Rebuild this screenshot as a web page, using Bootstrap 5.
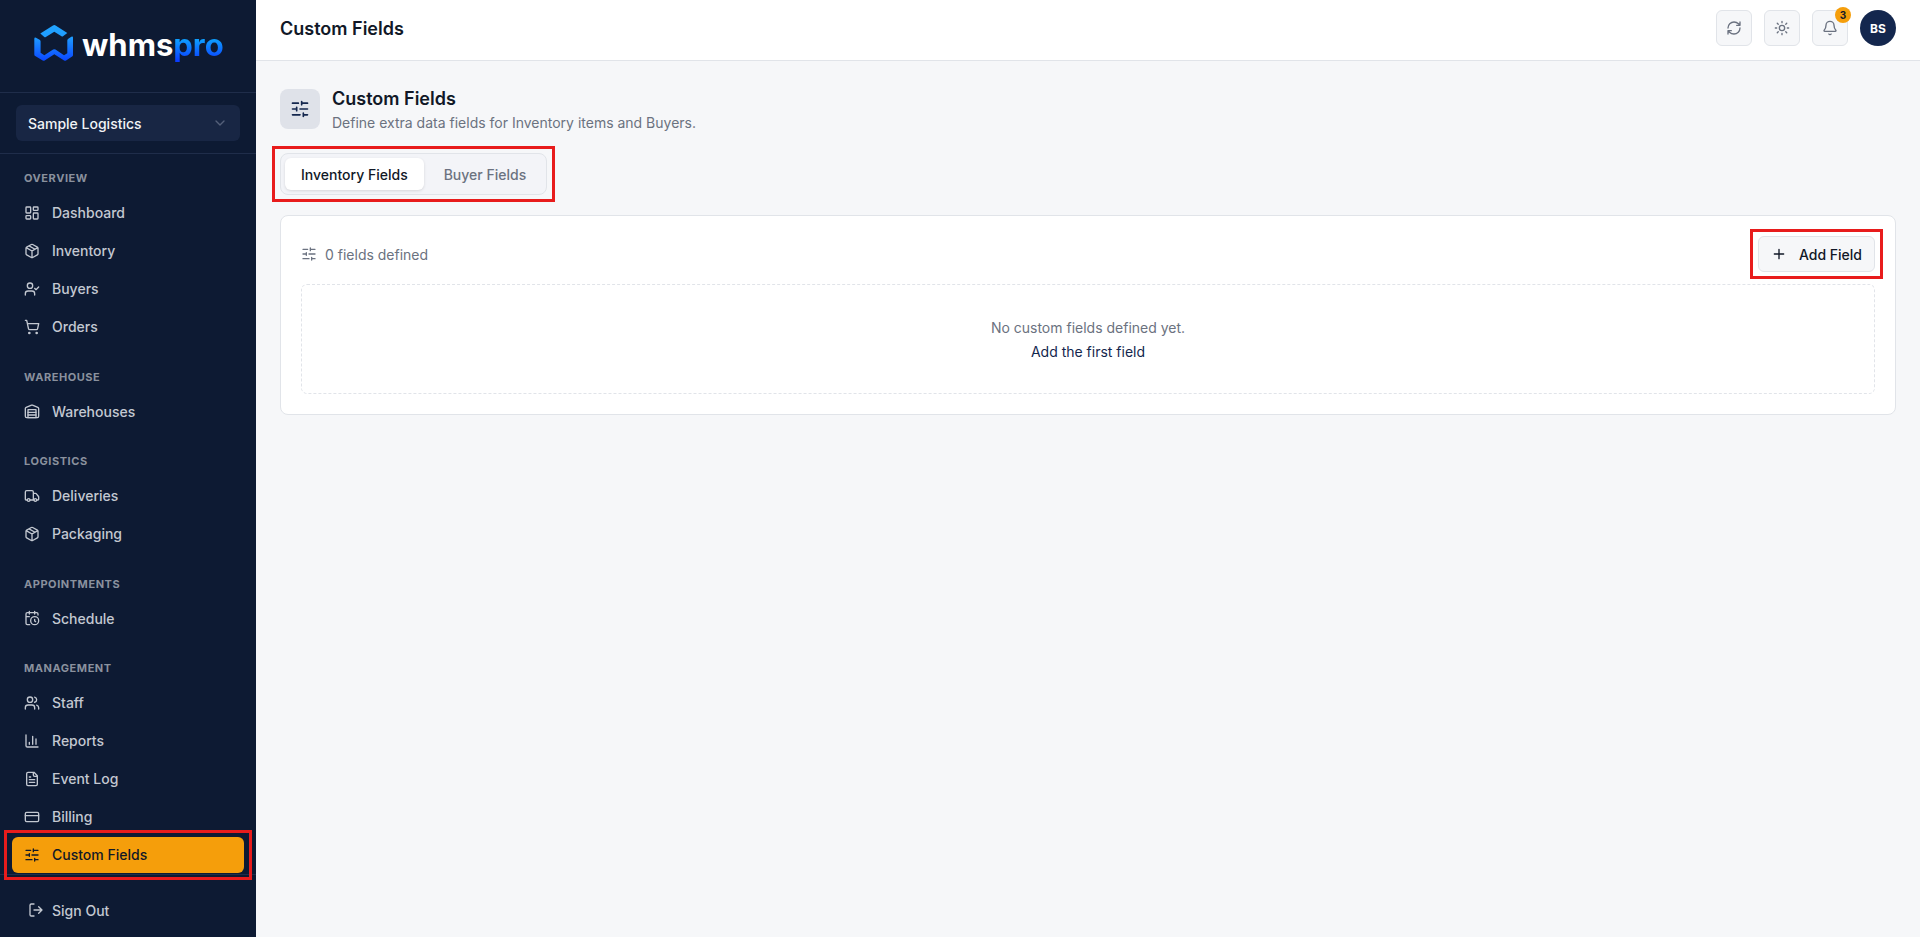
<!DOCTYPE html>
<html lang="en">
<head>
<meta charset="utf-8">
<meta name="viewport" content="width=device-width, initial-scale=1">
<title>Custom Fields - whmspro</title>
<link href="https://cdn.jsdelivr.net/npm/bootstrap@5.3.0/dist/css/bootstrap.min.css" rel="stylesheet">
<style>
:root{--navy:#0d1a33;--ink:#111827;--muted-ink:#6b7280;--line:#e1e4e9;--soft:#f6f7f9;--amber:#f59e0b;--callout:#e81c1c}
body{font-family:Inter,"Liberation Sans",sans-serif;font-size:14px;line-height:21px;color:var(--ink);background:var(--soft)}
svg{flex:none;fill:none;stroke:currentColor;stroke-width:2;stroke-linecap:round;stroke-linejoin:round}
.ico{width:16px;height:16px}
.sidebar{width:256px;background:var(--navy);color:#c3c8d1}
.brand{height:93px;padding:24px 0 30px 34px;border-bottom:1px solid #1f2d4a;gap:8px}
.brand svg{stroke:none;width:40px;height:36px}
.wordmark{font-size:31px;line-height:36px;font-weight:700;color:#fff;padding-top:4px}
.wordmark span{background:linear-gradient(#0ea0ff 35%,#0a3cff 95%);-webkit-background-clip:text;background-clip:text;color:transparent}
.switcher{padding:12px 16px;border-bottom:1px solid #1f2d4a}
.switch-btn{height:36px;padding:0 12px;background:#182644;border:0;border-radius:6px;color:#f1f3f6;font-weight:500}
.switch-btn svg{color:#55607a}
.menu{padding:16px 12px 0}
.menu-group+.menu-group{margin-top:24px}
.menu-label{font-size:11px;line-height:1.5;font-weight:700;letter-spacing:.05em;color:#8a919e;text-transform:uppercase;padding:0 12px;margin-bottom:8px}
.menu-link{height:36px;padding:0 12px;gap:12px;border-radius:6px;color:#c3c8d1;font-weight:500;text-decoration:none;margin-bottom:2px}
.menu-link:last-child{margin-bottom:0}
.menu-link.current{background:var(--amber);color:var(--ink)}
.foot{border-top:1px solid #1f2d4a;padding:16px 12px 8px}
.signout{height:38px;padding:0 16px;gap:8px;background:none;border:0;color:#c3c8d1;font-weight:500}
.callout-box{position:relative}
.callout-box::after{content:"";position:absolute;inset:-8px -9px;border:3px solid var(--callout);z-index:2;pointer-events:none}
.menu-link.callout-box::after{inset:-7px -8px}
.topbar{background:#fff;border-bottom:1px solid var(--line);padding:10px 24px 14px}
.heading{font-size:18px;line-height:27px;font-weight:600;margin:0}
.tool{width:36px;height:36px;border:1px solid var(--line);border-radius:6px;background:var(--soft);color:var(--muted-ink);padding:0}
.count{position:absolute;top:-4px;right:-4px;width:16px;height:16px;border-radius:50%;background:var(--amber);color:var(--ink);font-size:10px;line-height:16px;font-weight:700;text-align:center}
.avatar{width:36px;height:36px;border:0;border-radius:50%;background:#14274e;color:#fff;font-size:12px;font-weight:700;padding:0}
.page{padding:24px;gap:20px}
.page-icon{width:40px;height:40px;border-radius:8px;background:#dfe2e9;color:#14274e}
.page-icon svg{width:20px;height:20px}
.sub{color:var(--muted-ink);margin:0}
.switch-tabs{border:1px solid var(--line);border-radius:8px;background:#f3f4f8;padding:4px;gap:4px}
.switch-tabs button{height:32px;padding:0 16px;border:0;border-radius:6px;background:none;color:var(--muted-ink);font-weight:500}
.switch-tabs button.active{background:#fff;color:var(--ink);box-shadow:0 1px 3px rgba(0,0,0,.12)}
.panel{background:#fff;border:1px solid var(--line);border-radius:8px;padding:20px}
.add-btn{height:36px;padding:0 12px;gap:12px;border:1px solid var(--line);border-radius:6px;background:var(--soft);color:var(--ink);font-weight:500}
.empty{border:1px dashed var(--line);border-radius:6px;padding:33px 32px 31px;margin-top:12px;color:var(--muted-ink);line-height:20px}
.empty button{border:0;background:none;padding:0;color:#14274e;margin-top:4px}
</style>
</head>
<body>
<svg width="0" height="0" class="position-absolute" aria-hidden="true">
<defs>
<symbol id="sliders" viewBox="0 0 24 24"><path d="M10 5H3M12 19H3M14 3v4M16 17v4M21 12h-9M21 19h-5M21 5h-7M8 10v4M8 12H3"/></symbol>
<symbol id="box" viewBox="0 0 24 24"><path d="M11 21.73a2 2 0 0 0 2 0l7-4A2 2 0 0 0 21 16V8a2 2 0 0 0-1-1.73l-7-4a2 2 0 0 0-2 0l-7 4A2 2 0 0 0 3 8v8a2 2 0 0 0 1 1.73zM12 22V12M3.29 7 12 12l8.71-5M7.5 4.27l9 5.15"/></symbol>
</defs>
</svg>
<div class="d-flex min-vh-100">
<aside class="sidebar d-flex flex-column flex-shrink-0">
  <div class="brand d-flex align-items-center">
    <svg viewBox="0 0 40 36" aria-hidden="true"><defs><linearGradient id="lg" x1="0" y1="0" x2="0" y2="36" gradientUnits="userSpaceOnUse"><stop offset="0" stop-color="#22a5ff"/><stop offset=".35" stop-color="#1e9bff"/><stop offset="1" stop-color="#0a45ff"/></linearGradient></defs>
    <g fill="url(#lg)"><path d="M19 .4q1.300-.7 2.600 0L33.300 8l-4.300 3.300q-.7.500-1.500 0L20.300 6.800 11.800 12q-.8.500-1.500 0L6.300 8.600z"/><path d="M.3 14q0-2 1.700-1.200l3.600 2q1 .6 1 1.700v11.200l3.700 2.500 8.800-5.600q1.200-.7 2.400 0l8.500 5.600 3.300-2V15.500q0-1.200 1-1.800l3-2q1.700-.9 1.700.9V30q0 1-.9 1.500l-6 3.900q-1 .6-2 0L20.300 29.200l-9.600 6.200q-1 .6-2 0l-7.500-4.300q-.9-.6-.9-1.600z"/></g></svg>
    <div class="wordmark">whms<span>pro</span></div>
  </div>
  <div class="switcher"><button type="button" class="switch-btn w-100 d-flex align-items-center justify-content-between">Sample Logistics<svg class="ico" viewBox="0 0 24 24"><path d="m6 9 6 6 6-6"/></svg></button></div>
  <nav class="menu flex-grow-1" aria-label="Main">
    <div class="menu-group">
      <div class="menu-label">Overview</div>
      <a class="menu-link d-flex align-items-center" href="#"><svg class="ico" viewBox="0 0 24 24"><rect width="7" height="9" x="3" y="3" rx="1"/><rect width="7" height="5" x="14" y="3" rx="1"/><rect width="7" height="9" x="14" y="12" rx="1"/><rect width="7" height="5" x="3" y="16" rx="1"/></svg>Dashboard</a>
      <a class="menu-link d-flex align-items-center" href="#"><svg class="ico"><use href="#box"/></svg>Inventory</a>
      <a class="menu-link d-flex align-items-center" href="#"><svg class="ico" viewBox="0 0 24 24"><path d="m16 11 2 2 4-4M16 21v-2a4 4 0 0 0-4-4H6a4 4 0 0 0-4 4v2"/><circle cx="9" cy="7" r="4"/></svg>Buyers</a>
      <a class="menu-link d-flex align-items-center" href="#"><svg class="ico" viewBox="0 0 24 24"><circle cx="8" cy="21" r="1"/><circle cx="19" cy="21" r="1"/><path d="M2.05 2.05h2l2.66 12.42a2 2 0 0 0 2 1.58h9.78a2 2 0 0 0 1.95-1.57l1.65-7.43H5.12"/></svg>Orders</a>
    </div>
    <div class="menu-group">
      <div class="menu-label">Warehouse</div>
      <a class="menu-link d-flex align-items-center" href="#"><svg class="ico" viewBox="0 0 24 24"><path d="M22 8.35V20a2 2 0 0 1-2 2H4a2 2 0 0 1-2-2V8.35A2 2 0 0 1 3.26 6.5l8-3.2a2 2 0 0 1 1.48 0l8 3.2A2 2 0 0 1 22 8.35ZM6 18h12M6 14h12"/><rect width="12" height="12" x="6" y="10"/></svg>Warehouses</a>
    </div>
    <div class="menu-group">
      <div class="menu-label">Logistics</div>
      <a class="menu-link d-flex align-items-center" href="#"><svg class="ico" viewBox="0 0 24 24"><path d="M14 18V6a2 2 0 0 0-2-2H4a2 2 0 0 0-2 2v11a1 1 0 0 0 1 1h2M15 18H9M19 18h2a1 1 0 0 0 1-1v-3.65a1 1 0 0 0-.22-.624l-3.48-4.35A1 1 0 0 0 17.520 8H14"/><circle cx="17" cy="18" r="2"/><circle cx="7" cy="18" r="2"/></svg>Deliveries</a>
      <a class="menu-link d-flex align-items-center" href="#"><svg class="ico"><use href="#box"/></svg>Packaging</a>
    </div>
    <div class="menu-group">
      <div class="menu-label">Appointments</div>
      <a class="menu-link d-flex align-items-center" href="#"><svg class="ico" viewBox="0 0 24 24"><path d="M21 7.500V6a2 2 0 0 0-2-2H5a2 2 0 0 0-2 2v14a2 2 0 0 0 2 2h3.500M16 2v4M8 2v4M3 10h5M17.500 17.500 16 16.300V14"/><circle cx="16" cy="16" r="6"/></svg>Schedule</a>
    </div>
    <div class="menu-group">
      <div class="menu-label">Management</div>
      <a class="menu-link d-flex align-items-center" href="#"><svg class="ico" viewBox="0 0 24 24"><path d="M16 21v-2a4 4 0 0 0-4-4H6a4 4 0 0 0-4 4v2M22 21v-2a4 4 0 0 0-3-3.870M16 3.130a4 4 0 0 1 0 7.750"/><circle cx="9" cy="7" r="4"/></svg>Staff</a>
      <a class="menu-link d-flex align-items-center" href="#"><svg class="ico" viewBox="0 0 24 24"><path d="M3 3v16a2 2 0 0 0 2 2h16M18 17V9M13 17V5M8 17v-3"/></svg>Reports</a>
      <a class="menu-link d-flex align-items-center" href="#"><svg class="ico" viewBox="0 0 24 24"><path d="M15 2H6a2 2 0 0 0-2 2v16a2 2 0 0 0 2 2h12a2 2 0 0 0 2-2V7ZM14 2v4a2 2 0 0 0 2 2h4M10 9H8M16 13H8M16 17H8"/></svg>Event Log</a>
      <a class="menu-link d-flex align-items-center" href="#"><svg class="ico" viewBox="0 0 24 24"><rect width="20" height="14" x="2" y="5" rx="2"/><path d="M2 10h20"/></svg>Billing</a>
      <a class="menu-link current callout-box d-flex align-items-center" href="#" aria-current="page"><svg class="ico"><use href="#sliders"/></svg>Custom Fields</a>
    </div>
  </nav>
  <div class="foot"><button type="button" class="signout w-100 d-flex align-items-center"><svg class="ico" viewBox="0 0 24 24"><path d="M9 21H5a2 2 0 0 1-2-2V5a2 2 0 0 1 2-2h4M16 17l5-5-5-5M21 12H9"/></svg>Sign Out</button></div>
</aside>
<div class="flex-grow-1">
  <header class="topbar d-flex align-items-center justify-content-between">
    <div class="heading">Custom Fields</div>
    <div class="d-flex" style="gap:12px">
      <button type="button" class="tool d-flex align-items-center justify-content-center" aria-label="Refresh"><svg class="ico" viewBox="0 0 24 24"><path d="M3 12a9 9 0 0 1 9-9 9.750 9.750 0 0 1 6.740 2.740L21 8M21 3v5h-5M21 12a9 9 0 0 1-9 9 9.750 9.750 0 0 1-6.740-2.740L3 16M8 16H3v5"/></svg></button>
      <button type="button" class="tool d-flex align-items-center justify-content-center" aria-label="Theme"><svg class="ico" viewBox="0 0 24 24"><circle cx="12" cy="12" r="4"/><path d="M12 2v2M12 20v2M4.930 4.930l1.410 1.410M17.660 17.660l1.410 1.410M2 12h2M20 12h2M6.340 17.660l-1.410 1.410M19.070 4.930l-1.410 1.410"/></svg></button>
      <button type="button" class="tool position-relative d-flex align-items-center justify-content-center" aria-label="Notifications"><svg class="ico" viewBox="0 0 24 24"><path d="M10.268 21a2 2 0 0 0 3.464 0M3.262 15.326A1 1 0 0 0 4 17h16a1 1 0 0 0 .740-1.673C19.410 13.956 18 12.499 18 8A6 6 0 0 0 6 8c0 4.499-1.411 5.956-2.738 7.326"/></svg><span class="count">3</span></button>
      <button type="button" class="avatar">BS</button>
    </div>
  </header>
  <main class="page d-flex flex-column">
    <div class="d-flex align-items-center" style="gap:12px">
      <div class="page-icon d-flex align-items-center justify-content-center"><svg><use href="#sliders"/></svg></div>
      <div><h1 class="heading">Custom Fields</h1><p class="sub">Define extra data fields for Inventory items and Buyers.</p></div>
    </div>
    <div class="switch-tabs callout-box d-flex align-self-start" role="tablist">
      <button type="button" class="active" role="tab" aria-selected="true">Inventory Fields</button>
      <button type="button" role="tab" aria-selected="false">Buyer Fields</button>
    </div>
    <section class="panel">
      <div class="d-flex align-items-center justify-content-between">
        <div class="sub d-flex align-items-center gap-2"><svg class="ico"><use href="#sliders"/></svg>0 fields defined</div>
        <button type="button" class="add-btn callout-box d-flex align-items-center"><svg class="ico" viewBox="0 0 24 24"><path d="M5 12h14M12 5v14"/></svg>Add Field</button>
      </div>
      <div class="empty d-flex flex-column align-items-center">No custom fields defined yet.<button type="button">Add the first field</button></div>
    </section>
  </main>
</div>
</div>
<script src="https://cdn.jsdelivr.net/npm/bootstrap@5.3.0/dist/js/bootstrap.bundle.min.js"></script>
</body>
</html>
